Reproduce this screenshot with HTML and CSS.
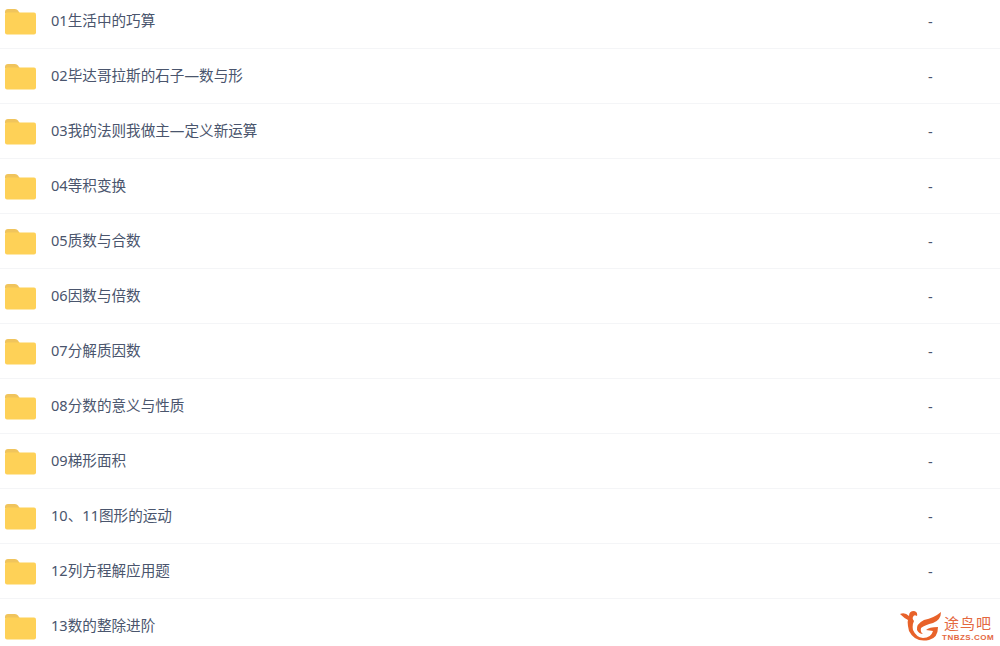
FILE: index.html
```html
<!DOCTYPE html>
<html lang="zh-CN">
  <head>
    <meta charset="UTF-8" />
    <title>文件列表</title>
    <link rel="stylesheet" href="styles.css">
  </head>
  <body>
    <svg class="defs" width="0" height="0">
      <symbol id="folder" viewBox="0 0 31 26">
        <path d="M0 3 Q0 0 3 0 H10 Q12 0 13 1.500 L15 4.500 H0 Z" fill="#f0c45c"/>
        <rect x="0" y="3.500" width="31" height="22" rx="2" fill="#fed157"/>
      </symbol>
    </svg>

    <ul class="file-list">
      <li class="row"><svg class="folder"><use href="#folder"/></svg><span class="name">01生活中的巧算</span><span class="size">-</span></li>
      <li class="row"><svg class="folder"><use href="#folder"/></svg><span class="name">02毕达哥拉斯的石子—数与形</span><span class="size">-</span></li>
      <li class="row"><svg class="folder"><use href="#folder"/></svg><span class="name">03我的法则我做主—定义新运算</span><span class="size">-</span></li>
      <li class="row"><svg class="folder"><use href="#folder"/></svg><span class="name">04等积变换</span><span class="size">-</span></li>
      <li class="row"><svg class="folder"><use href="#folder"/></svg><span class="name">05质数与合数</span><span class="size">-</span></li>
      <li class="row"><svg class="folder"><use href="#folder"/></svg><span class="name">06因数与倍数</span><span class="size">-</span></li>
      <li class="row"><svg class="folder"><use href="#folder"/></svg><span class="name">07分解质因数</span><span class="size">-</span></li>
      <li class="row"><svg class="folder"><use href="#folder"/></svg><span class="name">08分数的意义与性质</span><span class="size">-</span></li>
      <li class="row"><svg class="folder"><use href="#folder"/></svg><span class="name">09梯形面积</span><span class="size">-</span></li>
      <li class="row"><svg class="folder"><use href="#folder"/></svg><span class="name">10、11图形的运动</span><span class="size">-</span></li>
      <li class="row"><svg class="folder"><use href="#folder"/></svg><span class="name">12列方程解应用题</span><span class="size">-</span></li>
      <li class="row"><svg class="folder"><use href="#folder"/></svg><span class="name">13数的整除进阶</span><span class="size">-</span></li>
    </ul>

    <div class="watermark">
      <svg class="wm-logo" viewBox="0 0 42 30">
        <path d="M0 3 Q5 1 9 5 Q9 0 14 0 Q18 1 17 5 Q14 3 13 6 Q12 8 14 10 Q12 14 13 19 Q16 26 23 27 Q31 27 33 20 L26 19 Q29 16 38 16 Q38 27 29 29 Q15 32 9 20 Q7 12 8 9 Q4 7 0 3 Z" fill="#e8622a"/>
        <path d="M41 1 Q41 9 33 12 Q25 14 21 17 Q20 21 23 23 Q19 23 17 19 Q16 13 24 9 Q34 7 41 1 Z" fill="#e8622a"/>
      </svg>
      <div class="wm-text">
        <span class="wm-name">途鸟吧</span>
        <span class="wm-url">TNBZS.COM</span>
      </div>
    </div>
  </body>
</html>
```

FILE: styles.css
```css
html, body {
  margin: 0;
  padding: 0;
  height: 646px;
  overflow: hidden;
  background: #fff;
}
body {
  font-family: "Noto Sans", "Noto Sans CJK SC", sans-serif;
  color: #4a556d;
  font-size: 14.6px;
}
.defs {
  display: block;
  height: 0;
}
.file-list {
  list-style: none;
  margin: -6px 0 0;
  padding: 0;
}
.row {
  display: flex;
  align-items: center;
  height: 54px;
  border-bottom: 1px solid #f4f5f7;
  padding-left: 5px;
}
.folder {
  width: 31px;
  height: 26px;
  flex: none;
  position: relative;
  top: 1px;
}
.name {
  margin-left: 15px;
  flex: 1;
  position: relative;
  top: -2px;
}
.size {
  width: 72px;
}
.watermark {
  position: absolute;
  left: 900px;
  top: 611px;
  display: flex;
  gap: 0;
}
.wm-logo {
  width: 42px;
  height: 30px;
  background: #fff;
}
.wm-text {
  display: flex;
  flex-direction: column;
  color: #e4683f;
  align-items: center;
  margin-top: 3px;
}
.wm-name {
  font-size: 15px;
  line-height: 19px;
  letter-spacing: 1px;
}
.wm-url {
  font-family: "Liberation Sans", sans-serif;
  font-weight: bold;
  font-size: 8px;
  line-height: 9px;
  letter-spacing: 0.5px;
}
```
